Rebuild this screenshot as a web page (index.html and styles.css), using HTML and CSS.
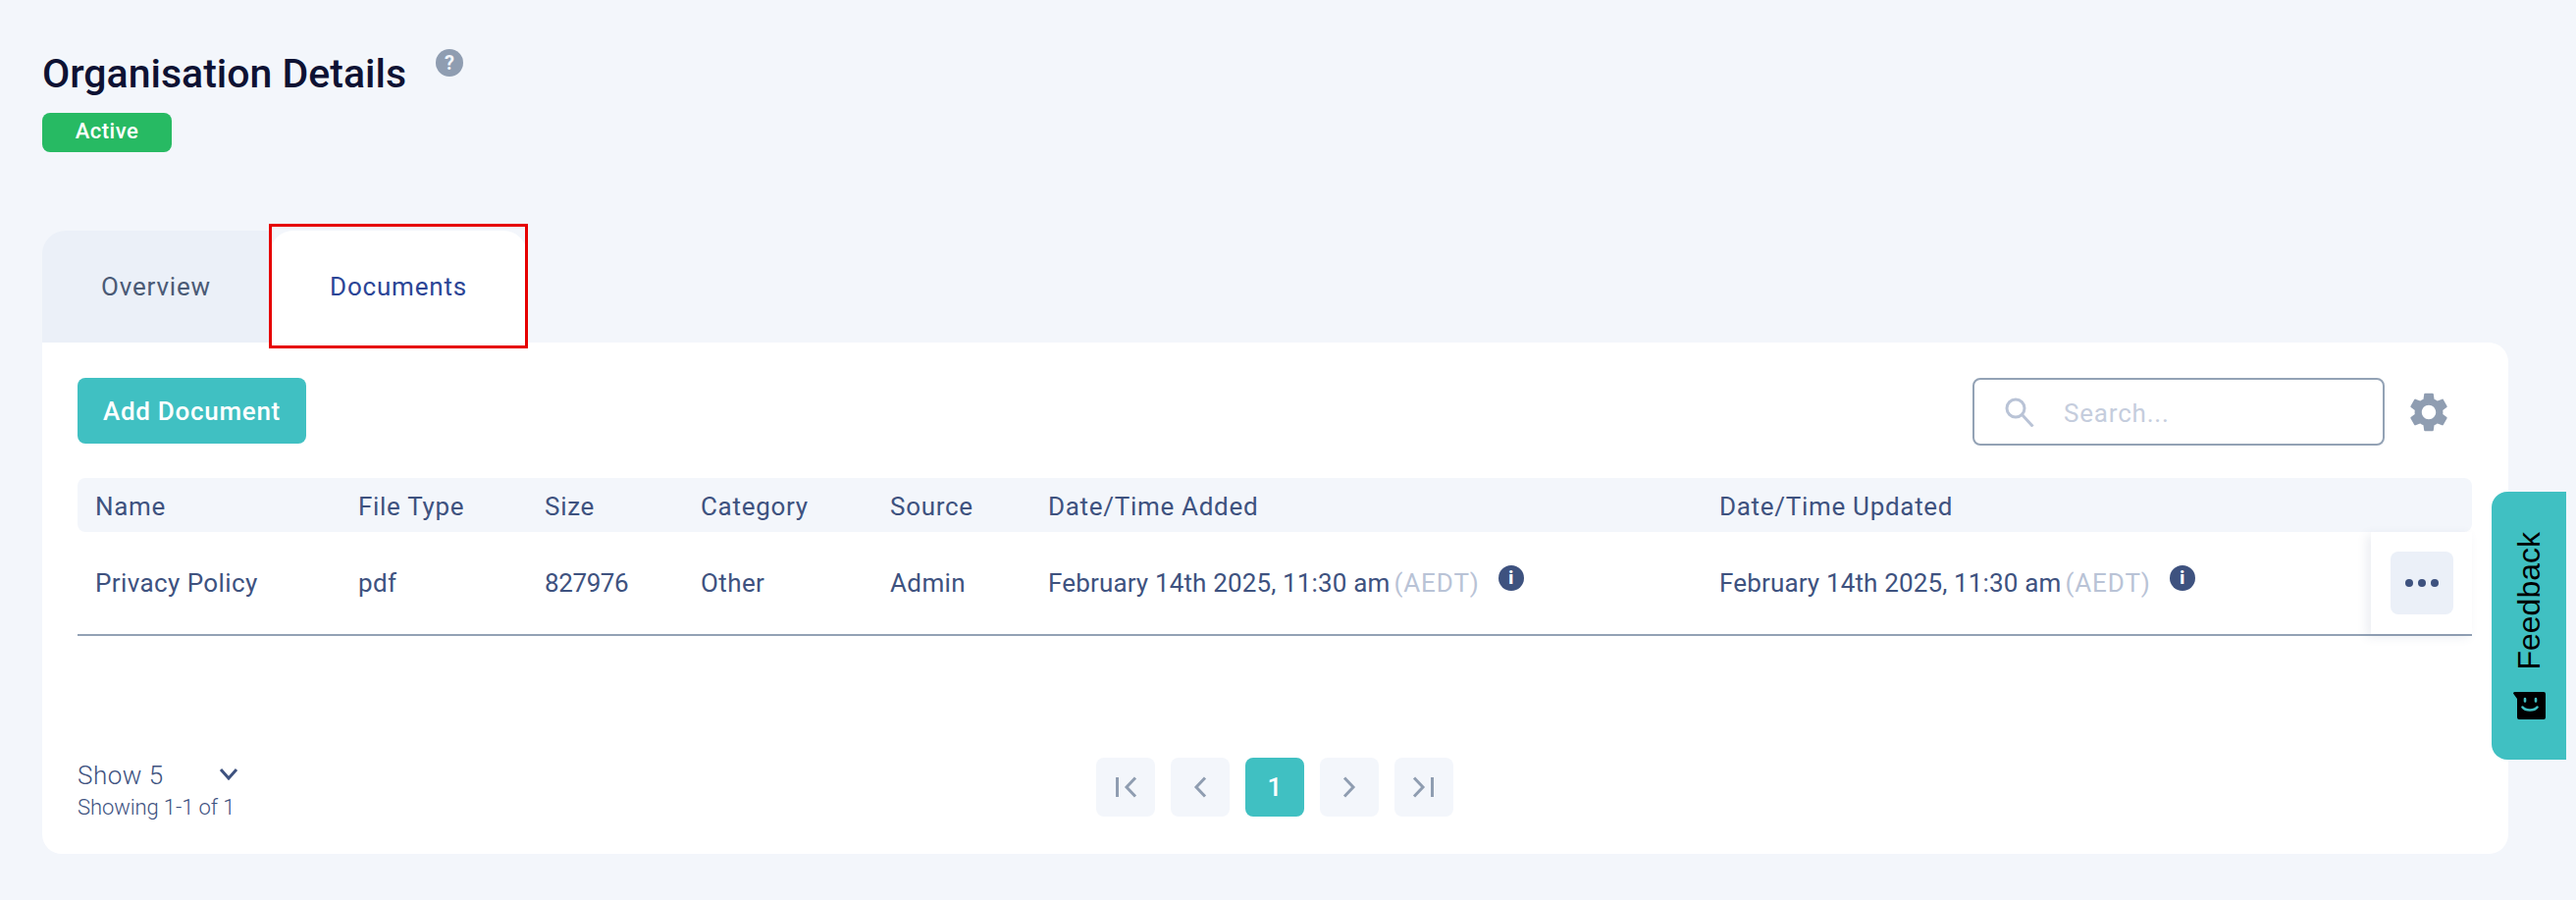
FILE: index.html
```html
<!DOCTYPE html>
<html lang="en">
<head>
  <meta charset="UTF-8">
  <title>Organisation Details</title>
  <link rel="stylesheet" href="styles.css">
</head>
<body>
<div class="page">
  <div class="page-head">
    <h1 class="page-title">Organisation Details</h1>
    <span class="help-icon">?</span>
  </div>
  <span class="status-badge">Active</span>

  <div class="tabs">
    <div class="tab">Overview</div>
    <div class="tab tab-active">Documents</div>
  </div>

  <div class="card">
    <div class="toolbar">
      <button type="button" class="add-btn">Add Document</button>
      <div class="toolbar-right">
        <div class="search-box">
          <svg class="search-icon" viewBox="0 0 30 30" fill="none" stroke="#b9c3d6" stroke-width="3">
            <circle cx="11" cy="11" r="9"/>
            <path d="M17.5 17.5l11 12"/>
          </svg>
          <span class="search-text">Search...</span>
        </div>
        <svg class="gear-icon" viewBox="2.5 2 19 20" fill="#8f9db1">
          <path d="M19.14 12.94c.04-.3.06-.61.06-.94 0-.32-.02-.64-.07-.94l2.03-1.58c.18-.14.23-.41.12-.61l-1.92-3.32c-.12-.22-.37-.29-.59-.22l-2.39.96c-.5-.38-1.03-.7-1.62-.94l-.36-2.54c-.04-.24-.24-.41-.48-.41h-3.84c-.24 0-.43.17-.47.41l-.36 2.54c-.59.24-1.13.57-1.62.94l-2.39-.96c-.22-.08-.47 0-.59.22L2.74 8.87c-.12.21-.08.47.12.61l2.03 1.58c-.05.3-.09.63-.09.94s.02.64.07.94l-2.03 1.58c-.18.14-.23.41-.12.61l1.92 3.32c.12.22.37.29.59.22l2.39-.96c.5.38 1.03.7 1.62.94l.36 2.54c.05.24.24.41.48.41h3.84c.24 0 .44-.17.47-.41l.36-2.54c.59-.24 1.13-.56 1.62-.94l2.39.96c.22.08.47 0 .59-.22l1.92-3.32c.12-.22.07-.47-.12-.61l-2.01-1.58zM12 15.6c-1.98 0-3.6-1.62-3.6-3.6s1.62-3.6 3.6-3.6 3.6 1.62 3.6 3.6-1.62 3.6-3.6 3.6z"/>
        </svg>
      </div>
    </div>

    <div class="table">
      <div class="table-row table-head">
        <div>Name</div>
        <div>File Type</div>
        <div>Size</div>
        <div>Category</div>
        <div>Source</div>
        <div>Date/Time Added</div>
        <div>Date/Time Updated</div>
      </div>
      <div class="table-row table-body">
        <div>Privacy Policy</div>
        <div>pdf</div>
        <div class="size-cell">827976</div>
        <div>Other</div>
        <div>Admin</div>
        <div class="date-cell">February 14th 2025, 11:30 am<span class="zone">(AEDT)</span><span class="info-icon">i</span></div>
        <div class="date-cell">February 14th 2025, 11:30 am<span class="zone">(AEDT)</span><span class="info-icon">i</span></div>
        <div class="action-cell">
          <button type="button" class="more-btn"><i></i><i></i><i></i></button>
        </div>
      </div>
    </div>

    <div class="table-foot">
      <div class="page-size">
        <div class="show-select">
          <span>Show 5</span>
          <svg class="chevron" viewBox="0 0 20 13" fill="none" stroke="#3e527f" stroke-width="3">
            <path d="M2 2l8 9 8-9"/>
          </svg>
        </div>
        <div class="showing">Showing 1-1 of 1</div>
      </div>
      <div class="pager">
        <div class="pager-btn">
          <svg viewBox="0 0 24 30" fill="none" stroke="#8f9db1" stroke-width="3"><path d="M3.5 5v20M22 5.5L13 15l9 9.5"/></svg>
        </div>
        <div class="pager-btn">
          <svg viewBox="0 0 24 30" fill="none" stroke="#8f9db1" stroke-width="3"><path d="M17 5.5L8 15l9 9.5"/></svg>
        </div>
        <div class="pager-btn pager-current">1</div>
        <div class="pager-btn">
          <svg viewBox="0 0 24 30" fill="none" stroke="#8f9db1" stroke-width="3"><path d="M7 5.5l9 9.5-9 9.5"/></svg>
        </div>
        <div class="pager-btn">
          <svg viewBox="0 0 24 30" fill="none" stroke="#8f9db1" stroke-width="3"><path d="M20.5 5v20M2 5.5l9 9.5-9 9.5"/></svg>
        </div>
      </div>
      <div></div>
    </div>
  </div>
</div>

<div class="feedback">
  <span class="feedback-text">Feedback</span>
  <svg class="feedback-icon" viewBox="0 0 33 28">
    <path d="M0 1.5Q0 0 1.500 0H31a2 2 0 0 1 2 2V26a2 2 0 0 1-2 2H6a2 2 0 0 1-2-2V7z" fill="#000"/>
    <path d="M12 7v2.500M23 7v2.500M9.500 15.500c3 4 12 4 15 0" fill="none" stroke="#40c0c2" stroke-width="2.600" stroke-linecap="round"/>
  </svg>
</div>
</body>
</html>
```

FILE: styles.css
```css
* {
  box-sizing: border-box;
}

body {
  margin: 0;
  background-color: #f3f6fb;
  font-family: Roboto, "Liberation Sans", sans-serif;
  font-size: 26px;
  color: #3e527f;
  letter-spacing: 0.4px;
}

.page {
  padding: 50px 69px 47px 43px;
}

.page-head {
  display: flex;
  align-items: flex-start;
  gap: 30px;
}

.page-title {
  margin: 3px 0 18px;
  font-size: 41px;
  line-height: 44px;
  font-weight: 500;
  color: #0e1233;
  letter-spacing: 0;
}

.help-icon {
  width: 28px;
  height: 28px;
  border-radius: 50%;
  background-color: #8f9db1;
  color: #f3f6fb;
  font-size: 20px;
  font-weight: 700;
  line-height: 28px;
  text-align: center;
  letter-spacing: 0;
}

.status-badge {
  display: block;
  width: 132px;
  height: 40px;
  border-radius: 8px;
  background-color: #27ba63;
  color: #ffffff;
  font-size: 22px;
  font-weight: 500;
  line-height: 38px;
  text-align: center;
  letter-spacing: 0.5px;
}

.tabs {
  display: flex;
  margin-top: 80px;
}

.tab {
  width: 232px;
  height: 114px;
  background-color: #ebf0f8;
  border-radius: 24px 0 0 0;
  color: #4a5a75;
  line-height: 114px;
  text-align: center;
  letter-spacing: 0.8px;
}

.tab-active {
  position: relative;
  width: 262px;
  background-color: #ffffff;
  border-radius: 24px 24px 0 0;
  color: #2b4596;
}

/* red box round the tab */
.tab-active::after {
  content: "";
  position: absolute;
  top: -7px;
  left: -1px;
  right: -1px;
  bottom: -6px;
  border: 3px solid #e60000;
}

.card {
  padding: 36px 37px 34px 36px;
  background-color: #ffffff;
  border-radius: 0 20px 20px 20px;
}

.toolbar {
  display: flex;
  justify-content: space-between;
  align-items: flex-start;
  padding-right: 25px;
  margin-bottom: 33px;
}

.add-btn {
  width: 233px;
  height: 67px;
  border: none;
  border-radius: 8px;
  background-color: #40c0c2;
  color: #ffffff;
  font-family: inherit;
  font-size: 26px;
  font-weight: 500;
  letter-spacing: 0.7px;
}

.toolbar-right {
  display: flex;
  align-items: center;
  gap: 26px;
}

.search-box {
  display: flex;
  align-items: center;
  width: 420px;
  height: 69px;
  padding-left: 31px;
  border: 2px solid #93a2b5;
  border-radius: 8px;
}

.search-icon {
  width: 30px;
  height: 30px;
}

.search-text {
  margin-left: 30px;
  padding-top: 2px;
  color: #c5cddd;
  letter-spacing: 0.8px;
}

.gear-icon {
  width: 38px;
  height: 40px;
}

.table-row {
  display: grid;
  grid-template-columns: 268px 190px 159px 193px 161px 684px 664px 103px;
  padding-left: 18px;
  align-items: center;
}

.table-head {
  height: 55px;
  padding-top: 2px;
  background-color: #f3f6fb;
  border-radius: 8px;
  letter-spacing: 0.7px;
}

.table-body {
  height: 106px;
  border-bottom: 2px solid #93a2b5;
}

.size-cell {
  letter-spacing: -0.4px;
}

.date-cell {
  display: flex;
  align-items: center;
  letter-spacing: 0.15px;
}

.zone {
  margin-left: 4px;
  color: #b9c3d6;
  letter-spacing: 0.9px;
}

.info-icon {
  width: 26px;
  height: 26px;
  margin: -10px 0 0 19px;
  border-radius: 50%;
  background-color: #3e527f;
  color: #ffffff;
  font-size: 18px;
  font-weight: 900;
  line-height: 26px;
  text-align: center;
  letter-spacing: 0;
}

.action-cell {
  display: flex;
  align-items: center;
  justify-content: center;
  height: 104px;
  background-color: #ffffff;
  box-shadow: -4px 3px 10px rgba(62, 82, 127, 0.1);
}

.more-btn {
  display: flex;
  align-items: center;
  justify-content: center;
  gap: 5px;
  width: 64px;
  height: 64px;
  border: none;
  border-radius: 8px;
  background-color: #ebf0f8;
}

.more-btn i {
  width: 8px;
  height: 8px;
  border-radius: 50%;
  background-color: #3e527f;
}

.table-foot {
  display: grid;
  grid-template-columns: 1fr auto 1fr;
  align-items: start;
  margin-top: 124px;
}

.show-select {
  display: flex;
  justify-content: space-between;
  align-items: center;
  width: 164px;
  height: 36px;
  font-weight: 300;
  letter-spacing: 0.5px;
}

.chevron {
  width: 20px;
  height: 13px;
  margin-top: -4px;
}

.showing {
  margin-top: 2px;
  font-size: 22px;
  font-weight: 300;
  line-height: 26px;
  letter-spacing: -0.1px;
}

.pager {
  display: flex;
  gap: 16px;
}

.pager-btn {
  display: flex;
  align-items: center;
  justify-content: center;
  width: 60px;
  height: 60px;
  border-radius: 8px;
  background-color: #f3f6fb;
}

.pager-btn svg {
  width: 24px;
  height: 30px;
}

.pager-current {
  background-color: #40c0c2;
  color: #ffffff;
  font-weight: 500;
}

.feedback {
  position: fixed;
  top: 501px;
  right: 10px;
  display: flex;
  flex-direction: column;
  align-items: center;
  justify-content: center;
  gap: 22px;
  width: 76px;
  height: 273px;
  background-color: #40c0c2;
  border-radius: 16px 0 0 16px;
  color: #000000;
}

.feedback-text {
  writing-mode: vertical-rl;
  transform: rotate(180deg);
  font-family: "Liberation Sans", sans-serif;
  font-size: 32px;
  line-height: 32px;
  letter-spacing: 0;
}

.feedback-icon {
  width: 33px;
  height: 28px;
}
```
